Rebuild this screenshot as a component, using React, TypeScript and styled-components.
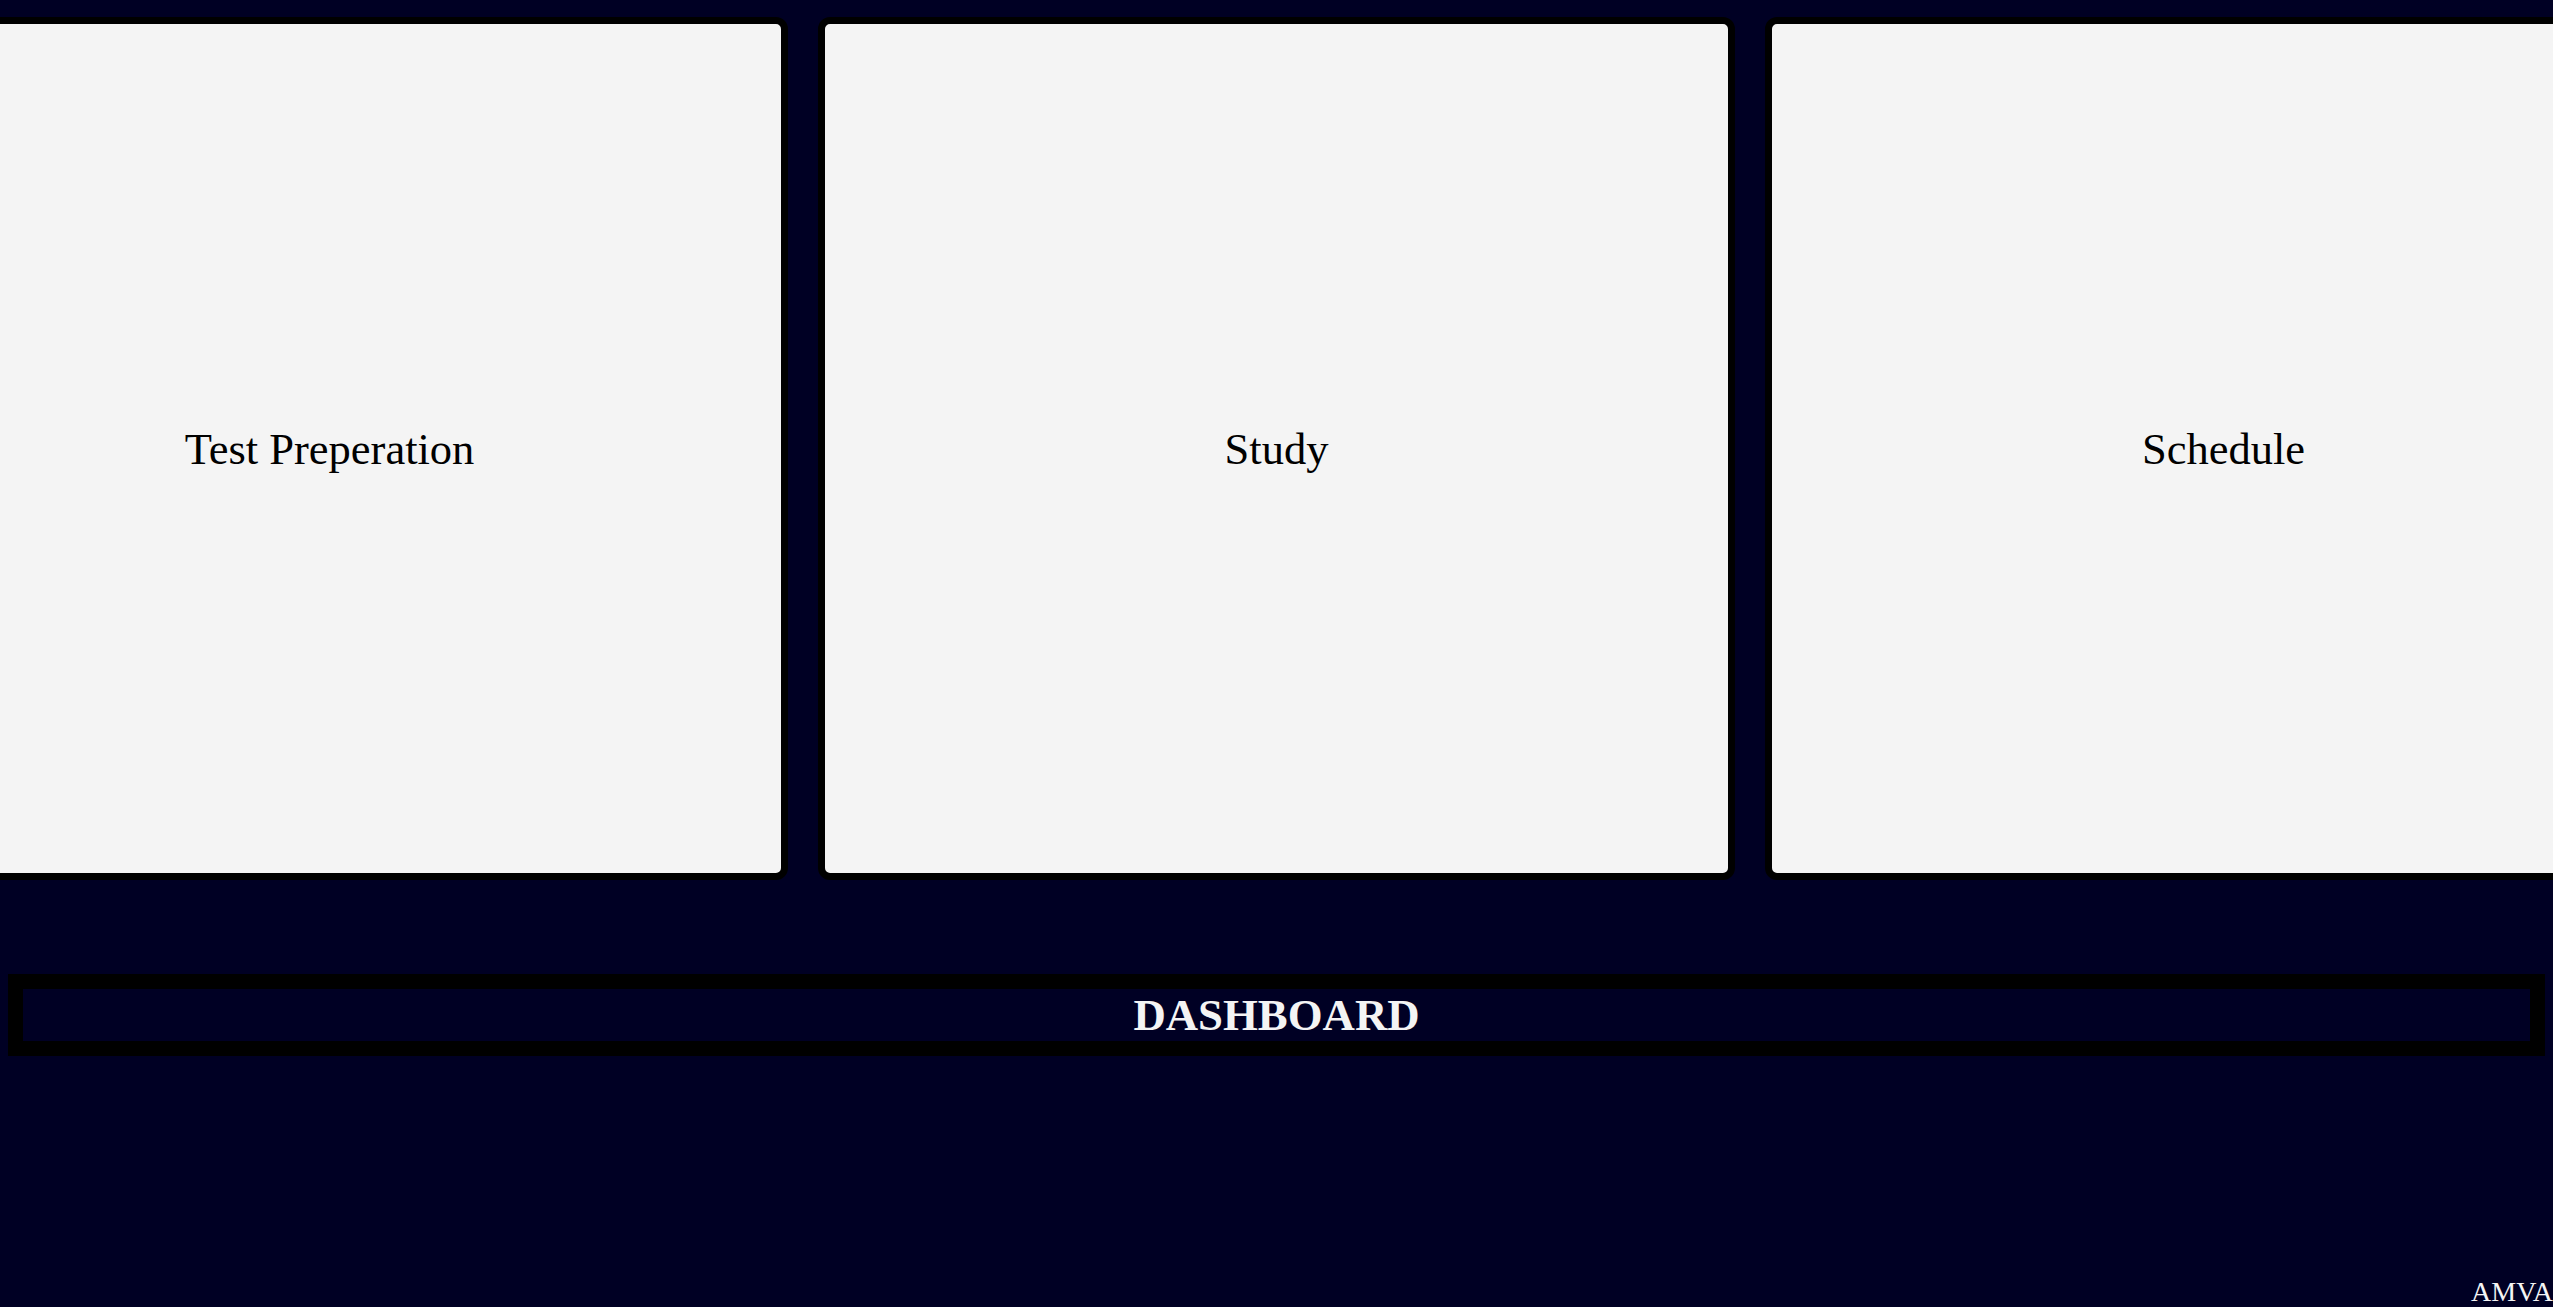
import React from "react";
import styled, { createGlobalStyle } from "styled-components";

const GlobalStyle = createGlobalStyle`
  html, body {
    margin: 0;
    padding: 0;
    background-color: #000024;
  }
  * {
    box-sizing: border-box;
  }
`;

const Page = styled.div`
  height: 100vh;
  padding: 8px 8px 0 8px;
  display: flex;
  flex-direction: column;
  overflow: hidden;
  background-color: #000024;
  font-family: "Liberation Serif", "Times New Roman", serif;
`;

const CardRow = styled.div`
  margin-top: 9px;
  display: flex;
  justify-content: center;
  gap: 30px;
`;

const Card = styled.div`
  flex: 0 0 917px;
  height: 863px;
  border: 7px solid #000;
  border-radius: 12px;
  background-color: #f4f4f4;
  display: flex;
  align-items: center;
  justify-content: center;
  color: #000;
  font-size: 44.5px;
  cursor: pointer;
`;

const DashboardBar = styled.h1`
  margin: 94px 0 0 0;
  border: 15px solid #000;
  height: 82px;
  line-height: 52px;
  text-align: center;
  color: #f4f4f4;
  font-size: 44.8px;
  font-weight: bold;
`;

const Footer = styled.div`
  margin: auto -8px 0 0;
  text-align: right;
  color: #f4f4f4;
  font-size: 28px;
  line-height: 31px;
  white-space: nowrap;
`;

const cards = ["Test Preperation", "Study", "Schedule"];

export default function App() {
  return (
    <>
      <GlobalStyle />
      <Page>
        <CardRow>
          {cards.map((c) => (
            <Card key={c}>{c}</Card>
          ))}
        </CardRow>
        <DashboardBar>DASHBOARD</DashboardBar>
        <Footer>AMVA</Footer>
      </Page>
    </>
  );
}
